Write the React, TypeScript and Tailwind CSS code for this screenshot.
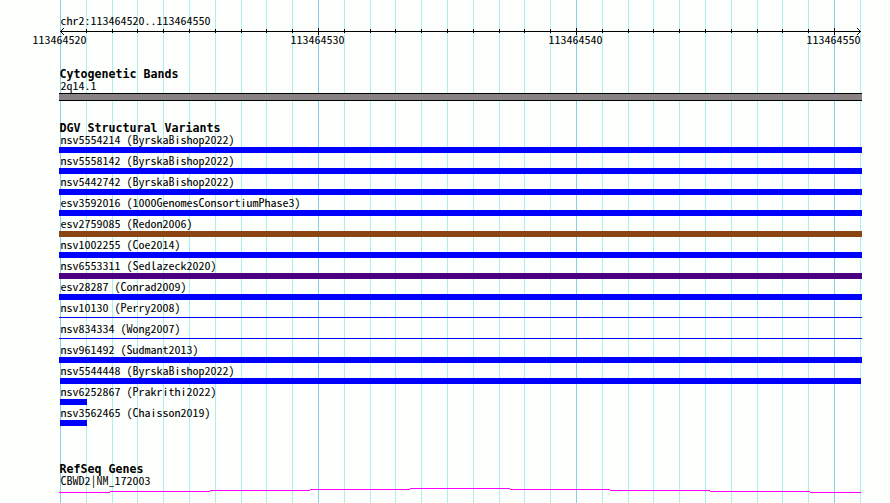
const TRACK_LEFT = 60;
const BASE_WIDTH = 25.8;

const rulerLabels = ['113464520', '113464530', '113464540', '113464550'];

type Variant = {
  id: string;
  study: string;
  bar: string;
};

const FULL = 'ml-[59px] w-[803px] h-1.5';
const THIN = 'ml-[59px] w-[803px] h-px mt-0.5 mb-[3px]';
const SHORT = 'ml-[60px] w-[27px] h-1.5';

const variants: Variant[] = [
  { id: 'nsv5554214', study: 'ByrskaBishop2022', bar: `${FULL} bg-[#0000ff]` },
  { id: 'nsv5558142', study: 'ByrskaBishop2022', bar: `${FULL} bg-[#0000ff]` },
  { id: 'nsv5442742', study: 'ByrskaBishop2022', bar: `${FULL} bg-[#0000ff]` },
  { id: 'esv3592016', study: '1000GenomesConsortiumPhase3', bar: `${FULL} bg-[#0000ff]` },
  { id: 'esv2759085', study: 'Redon2006', bar: `${FULL} bg-[#8b4513]` },
  { id: 'nsv1002255', study: 'Coe2014', bar: `${FULL} bg-[#0000ff]` },
  { id: 'nsv6553311', study: 'Sedlazeck2020', bar: `${FULL} bg-[#4b0082]` },
  { id: 'esv28287', study: 'Conrad2009', bar: `${FULL} bg-[#0000ff]` },
  { id: 'nsv10130', study: 'Perry2008', bar: `${THIN} bg-[#0000ff]` },
  { id: 'nsv834334', study: 'Wong2007', bar: `${THIN} bg-[#0000ff]` },
  { id: 'nsv961492', study: 'Sudmant2013', bar: `${FULL} bg-[#0000ff]` },
  { id: 'nsv5544448', study: 'ByrskaBishop2022', bar: 'ml-[60px] w-[801px] h-1.5 bg-[#0000ff]' },
  { id: 'nsv6252867', study: 'Prakrithi2022', bar: `${SHORT} bg-[#0000ff]` },
  { id: 'nsv3562465', study: 'Chaisson2019', bar: `${SHORT} bg-[#0000ff]` },
];

// One entry per base, every tenth base is a major position
const positions = Array.from({ length: 32 }, (_, i) => ({
  x: Math.round(TRACK_LEFT + i * BASE_WIDTH),
  major: i % 10 === 0,
}));

function GridLines() {
  return (
    <svg className="absolute inset-0" width="890" height="503" shapeRendering="crispEdges">
      {positions.map(({ x, major }) => (
        <rect key={x} x={x} y={0} width={1} height={503} fill={major ? '#87ceeb' : '#afeeee'} />
      ))}
    </svg>
  );
}

function Ruler() {
  return (
    <svg className="-mt-px block" width="890" height="9" shapeRendering="crispEdges">
      <rect x={60} y={4} width={801} height={1} />
      {positions.slice(1, -1).map(({ x, major }) => (
        <rect key={x} x={x} y={major ? 1 : 2} width={1} height={major ? 7 : 4} />
      ))}
      {/* Arrow heads */}
      {[1, 2, 3].map((d) => (
        <g key={d}>
          <rect x={60 + d} y={4 - d} width={1} height={1} />
          <rect x={60 + d} y={4 + d} width={1} height={1} />
          <rect x={860 - d} y={4 - d} width={1} height={1} />
          <rect x={860 - d} y={4 + d} width={1} height={1} />
        </g>
      ))}
    </svg>
  );
}

function Label({ children }: { children: string }) {
  return (
    <div className="h-[13px] pl-[60.4px] text-[12px] leading-[9px] whitespace-pre">
      <span className="inline-block origin-bottom scale-y-[0.93]">{children}</span>
    </div>
  );
}

function Heading({ children }: { children: string }) {
  return (
    <h2 className="h-3 pl-[59.5px] font-['DejaVu_Sans_Mono',monospace] text-[11.63px] leading-3 font-bold whitespace-pre">
      {children}
    </h2>
  );
}

export default function App() {
  return (
    <div className="relative h-[503px] w-[890px] overflow-hidden bg-[#fdfffc] font-['Noto_Sans_CJK_JP',monospace] text-black [font-feature-settings:'hwid'_1]">
      <GridLines />

      <main className="relative flex flex-col">
        <header className="pt-[15px]">
          <Label>chr2:113464520..113464550</Label>
          <Ruler />
          <div className="-mt-[2px] ml-[32.4px] flex h-[13px] w-[828px] justify-between text-[12px] leading-[9px]">
            {rulerLabels.map((label) => (
              <span key={label} className="inline-block h-[9px] w-[54px] origin-bottom scale-y-[0.93]">
                {label}
              </span>
            ))}
          </div>
        </header>

        <section className="pt-[21px]">
          <Heading>Cytogenetic Bands</Heading>
          <Label>2q14.1</Label>
          <div className="ml-[59px] h-2 w-[803px] border-y border-black bg-[#888284]" />
        </section>

        <section className="pt-[21px]">
          <Heading>DGV Structural Variants</Heading>
          {variants.map((variant) => (
            <div key={variant.id} className="h-[21px]">
              <Label>{`${variant.id} (${variant.study})`}</Label>
              <div className={variant.bar} />
            </div>
          ))}
        </section>

        <section className="pt-[35px]">
          <Heading>RefSeq Genes</Heading>
          <Label>CBWD2|NM_172003</Label>
          <svg className="block" width="890" height="6" shapeRendering="crispEdges">
            <path
              d="M59 4.5H110M110 3.5H210M210 2.5H310M310 1.5H410M410 .5H510M510 1.5H610M610 2.5H710M710 3.5H810M810 4.5H861"
              stroke="#ff00ff"
              fill="none"
            />
          </svg>
        </section>
      </main>
    </div>
  );
}
